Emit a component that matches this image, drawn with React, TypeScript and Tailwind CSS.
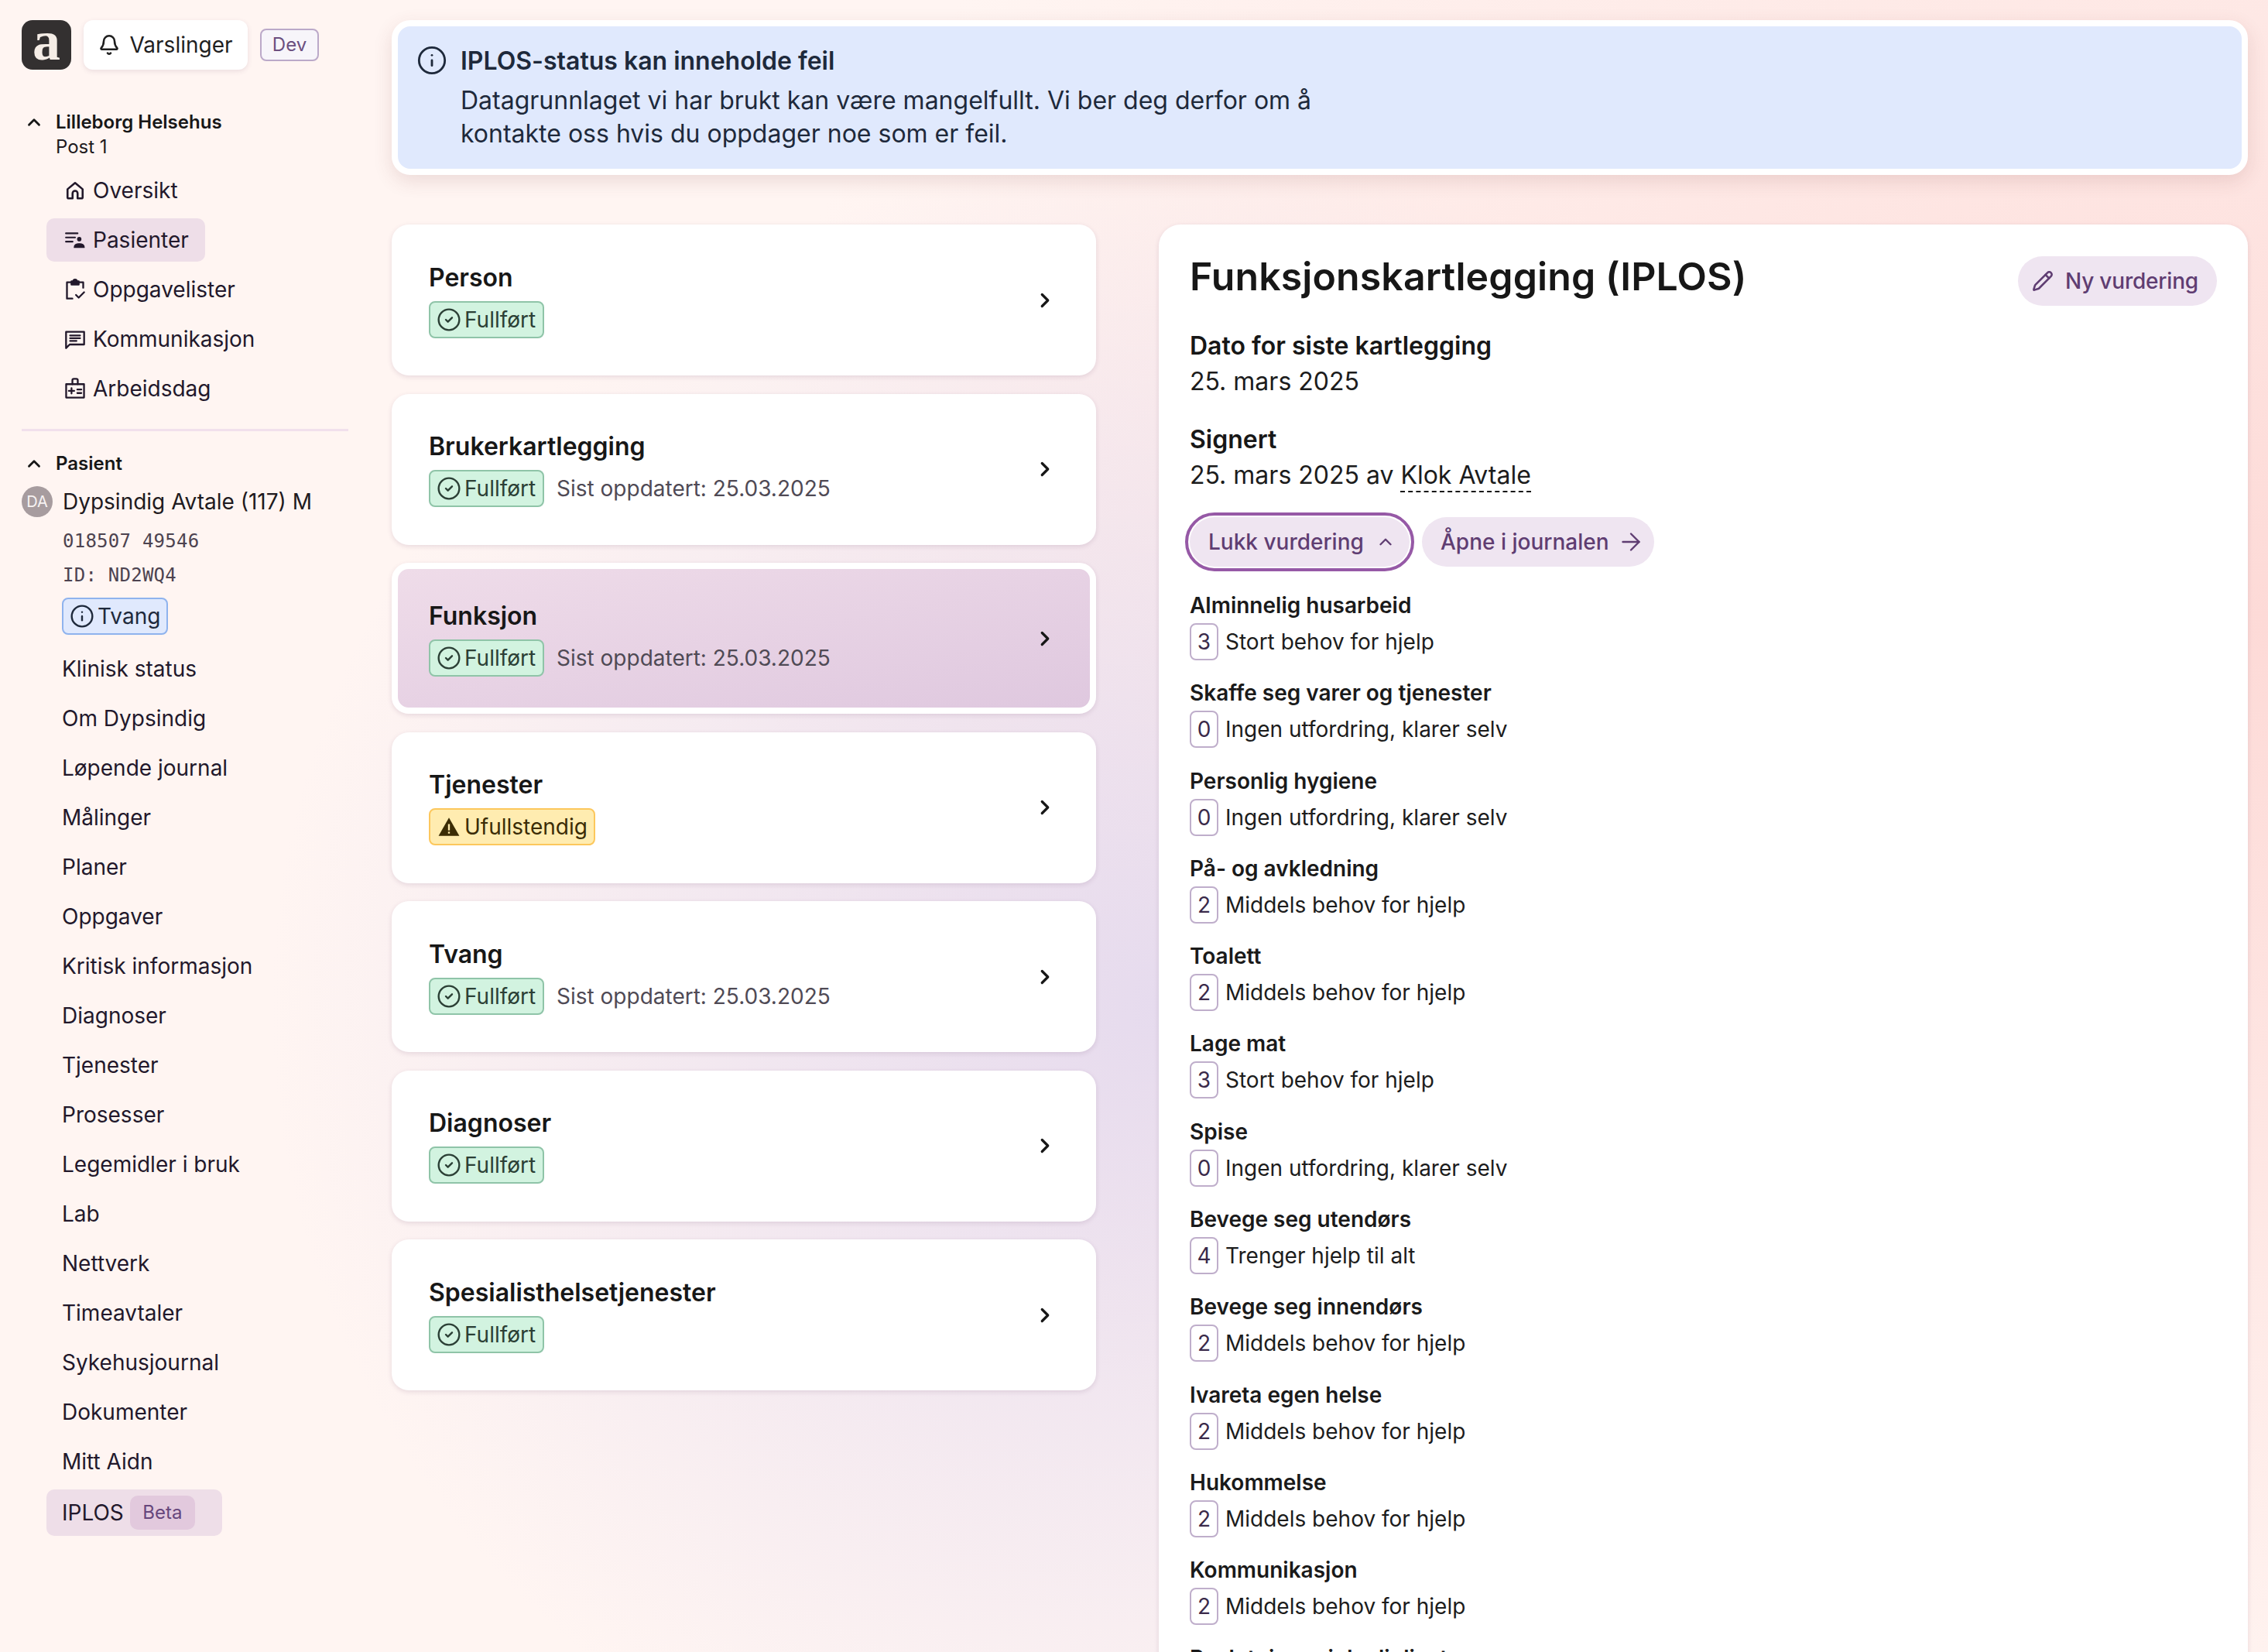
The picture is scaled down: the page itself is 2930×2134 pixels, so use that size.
import React from 'react';
import { ArrowRight, Bell, ChevronRight, ChevronUp, CircleCheck, Info, Pencil } from 'lucide-react';

const FONT = "font-['Inter',sans-serif]";

const HomeIcon = () => (
  <svg width="26" height="26" viewBox="0 0 24 24" fill="none" stroke="currentColor" strokeWidth="2.4" strokeLinejoin="round">
    <path d="M3 10.500 12 3l9 7.500V20a1.500 1.500 0 0 1-1.500 1.500H15v-6a3 3 0 0 0-6 0v6H4.500A1.500 1.500 0 0 1 3 20z" />
  </svg>
);

const PatientListIcon = () => (
  <svg width="28" height="26" viewBox="0 0 26 24" fill="none" stroke="currentColor" strokeWidth="2" strokeLinecap="round">
    <path d="M2 4h14M2 9h11M2 14h8" />
    <circle cx="18" cy="11" r="2.600" fill="currentColor" stroke="none" />
    <path d="M12 21c0-3.200 2.500-4.500 6-4.500s6 1.300 6 4.500z" fill="currentColor" stroke="currentColor" strokeWidth="1.200" strokeLinejoin="round" />
  </svg>
);

const TaskListIcon = () => (
  <svg width="28" height="28" viewBox="0 0 24 24" fill="none" stroke="currentColor" strokeWidth="2" strokeLinecap="round" strokeLinejoin="round">
    <path d="M8 4H3v18h6M16 4h5v6" />
    <path d="M8 3h2a2 2 0 0 1 4 0h2v3.500H8z" fill="currentColor" />
    <path d="m13 18 3 3 6-6" />
  </svg>
);

const MessageIcon = () => (
  <svg width="28" height="28" viewBox="0 0 24 24" fill="none" stroke="currentColor" strokeWidth="2" strokeLinejoin="round" strokeLinecap="round">
    <path d="M2 4h20v14H6l-4 4z" />
    <path d="M6.500 8h11M6.500 11h11M6.500 14h7" />
  </svg>
);

const WorkdayIcon = () => (
  <svg width="28" height="30" viewBox="0 0 24 26" fill="none" stroke="currentColor" strokeWidth="2" strokeLinejoin="round" strokeLinecap="round">
    <path d="M2 8h20v15H2z" />
    <path d="M9 8V3.500a1.500 1.500 0 0 1 1.500-1.500h3A1.500 1.500 0 0 1 15 3.500V8" />
    <path d="M5 15.500h6M8 12.500v6M14.500 14h4.500M14.500 18h4.500" />
  </svg>
);

const WarningIcon = () => (
  <svg width="28" height="28" viewBox="0 0 24 24">
    <path d="M12 2 23.500 22H.5z" fill="#3b2c05" />
    <rect x="11" y="9" width="2" height="7" fill="#ffecb0" />
    <rect x="11" y="17.500" width="2" height="2" fill="#ffecb0" />
  </svg>
);

const topLinks = [
  { label: 'Oversikt', icon: <HomeIcon /> },
  { label: 'Pasienter', icon: <PatientListIcon />, active: true },
  { label: 'Oppgavelister', icon: <TaskListIcon /> },
  { label: 'Kommunikasjon', icon: <MessageIcon /> },
  { label: 'Arbeidsdag', icon: <WorkdayIcon /> },
];

const patientLinks = [
  'Klinisk status',
  'Om Dypsindig',
  'Løpende journal',
  'Målinger',
  'Planer',
  'Oppgaver',
  'Kritisk informasjon',
  'Diagnoser',
  'Tjenester',
  'Prosesser',
  'Legemidler i bruk',
  'Lab',
  'Nettverk',
  'Timeavtaler',
  'Sykehusjournal',
  'Dokumenter',
  'Mitt Aidn',
];

const sections = [
  { title: 'Person', done: true },
  { title: 'Brukerkartlegging', done: true, updated: true },
  { title: 'Funksjon', done: true, updated: true, selected: true },
  { title: 'Tjenester', done: false },
  { title: 'Tvang', done: true, updated: true },
  { title: 'Diagnoser', done: true },
  { title: 'Spesialisthelsetjenester', done: true },
];

const LEVELS: Record<number, string> = {
  0: 'Ingen utfordring, klarer selv',
  2: 'Middels behov for hjelp',
  3: 'Stort behov for hjelp',
  4: 'Trenger hjelp til alt',
};

const assessments: [string, number][] = [
  ['Alminnelig husarbeid', 3],
  ['Skaffe seg varer og tjenester', 0],
  ['Personlig hygiene', 0],
  ['På- og avkledning', 2],
  ['Toalett', 2],
  ['Lage mat', 3],
  ['Spise', 0],
  ['Bevege seg utendørs', 4],
  ['Bevege seg innendørs', 2],
  ['Ivareta egen helse', 2],
  ['Hukommelse', 2],
  ['Kommunikasjon', 2],
  ['Beslutninger i dagliglivet', 2],
];

const StatusBadge = ({ done }: { done: boolean }) =>
  done ? (
    <span className="flex h-[48px] w-[149px] items-center gap-[4px] rounded-[8px] border-2 border-[#8fc4a8] bg-[#d2f3e0] pl-[8px] text-[28px] text-[#2b3f35]">
      <CircleCheck size={32} strokeWidth={1.8} />
      Fullført
    </span>
  ) : (
    <span className="flex h-[48px] items-center gap-[6px] rounded-[8px] border-2 border-[#fcc75c] bg-[#ffecb0] pl-[10px] pr-[8px] text-[28px] text-[#3b2c05]">
      <WarningIcon />
      Ufullstendig
    </span>
  );

const SectionCard = ({ title, done, updated, selected }: { title: string; done: boolean; updated?: boolean; selected?: boolean }) => (
  <div
    className={
      selected
        ? 'flex h-[195px] items-center justify-between rounded-[22px] border-8 border-white bg-gradient-to-br from-[#efdce9] to-[#dfc8df] pl-[40px] pr-[43px] shadow-[0_2px_6px_rgba(90,50,90,0.14)]'
        : 'flex h-[195px] items-center justify-between rounded-[22px] bg-white pl-[48px] pr-[51px] shadow-[0_2px_6px_rgba(90,50,90,0.14)]'
    }
  >
    <div>
      <div className="mb-[10px] text-[32px] leading-[40px] font-semibold text-[#171717]">{title}</div>
      <div className="flex items-center gap-[16px]">
        <StatusBadge done={done} />
        {updated && <span className="text-[28px] text-[#4f4a55]">Sist oppdatert: 25.03.2025</span>}
      </div>
    </div>
    <ChevronRight size={30} strokeWidth={2.6} className="text-[#171717]" />
  </div>
);

const AssessmentRow = ({ label, level }: { label: string; level: number }) => (
  <div>
    <div className="mb-[5px] text-[28px] leading-[36px] font-semibold text-[#1a1a1a]">{label}</div>
    <div className="flex items-center gap-[9px] text-[28px] text-[#1c1c1c]">
      <span className="flex h-[48px] w-[37px] items-center justify-center rounded-[8px] border-2 border-[#bfaecb] text-[#3a2a4a]">{level}</span>
      {LEVELS[level]}
    </div>
  </div>
);

export default function App() {
  return (
    <div
      className={`${FONT} flex h-screen overflow-hidden bg-[#fff5f2] bg-[radial-gradient(ellipse_1150px_1100px_at_1500px_1300px,#e6dbee,transparent),radial-gradient(ellipse_2000px_1500px_at_2930px_800px,#fddad7,transparent)]`}
    >
      {/* sidebar */}
      <aside className="w-[506px] shrink-0 pl-[28px] pt-[26px] text-[#22182b]">
        <div className="flex items-center">
          <div className="flex h-[64px] w-[64px] items-center justify-center rounded-[14px] bg-[#333030] pb-[10px] font-['Liberation_Serif',serif] text-[72px] leading-none font-bold text-[#f5ede6]">
            a
          </div>
          <button className="ml-[16px] flex h-[64px] w-[212px] items-center justify-center gap-[12px] rounded-[12px] bg-white text-[28px] text-[#1f1f1f] shadow-[0_2px_6px_rgba(90,50,90,0.12)]">
            <Bell size={28} strokeWidth={2.2} />
            Varslinger
          </button>
          <span className="ml-[16px] flex h-[42px] w-[76px] items-center justify-center rounded-[8px] border-2 border-[#bba9c9] bg-[#f7f5fa] text-[24px] text-[#6b4f7f]">
            Dev
          </span>
        </div>

        <div className="mt-[52px] flex items-start">
          <ChevronUp size={26} strokeWidth={2.6} className="ml-[3px] mt-[3px] text-[#171717]" />
          <div className="ml-[15px] text-[24px] leading-[32px] text-[#1f1a20]">
            <div className="font-semibold text-[#171717]">Lilleborg Helsehus</div>
            <div>Post 1</div>
          </div>
        </div>

        <nav className="mt-[12px] flex flex-col gap-[8px]">
          {topLinks.map((link) => (
            <div
              key={link.label}
              className={`ml-[32px] flex h-[56px] w-fit items-center gap-[9px] rounded-[10px] pl-[23px] pr-[21px] text-[28px] ${link.active ? 'bg-[#eedee8]' : ''}`}
            >
              <span className="flex w-[28px] justify-center">{link.icon}</span>
              {link.label}
            </div>
          ))}
        </nav>

        <div className="mt-[24px] h-[3px] w-[422px] bg-[#f1e0ec]" />

        <div className="mt-[26px] flex h-[32px] items-center">
          <ChevronUp size={26} strokeWidth={2.6} className="ml-[3px] text-[#171717]" />
          <span className="ml-[15px] text-[24px] font-semibold text-[#171717]">Pasient</span>
        </div>

        <div className="mt-[13px] flex h-[40px] items-center">
          <span className="flex h-[40px] w-[40px] items-center justify-center rounded-full bg-[#a79c9f] text-[20px] text-[#f7f3f3]">DA</span>
          <span className="ml-[13px] text-[28px] text-[#1f1a20]">Dypsindig Avtale (117) M</span>
        </div>

        <div className="ml-[53px] mt-[15px] h-[32px] font-['DejaVu_Sans_Mono',monospace] text-[24px] leading-[32px] tracking-[0.25px] text-[#4d4350]">018507 49546</div>
        <div className="ml-[53px] mt-[12px] h-[32px] font-['DejaVu_Sans_Mono',monospace] text-[24px] leading-[32px] tracking-[0.25px] text-[#4d4350]">ID: ND2WQ4</div>
        <div className="ml-[52px] mt-[13px] flex h-[48px] w-[137px] items-center gap-[4px] rounded-[8px] border-2 border-[#8fb3ee] bg-[#e0e9fd] pl-[8px] text-[28px] text-[#1e293b]">
          <Info size={32} strokeWidth={1.8} />
          Tvang
        </div>

        <nav className="mt-[16px] flex flex-col gap-[8px]">
          {patientLinks.map((label) => (
            <div key={label} className="ml-[52px] flex h-[56px] items-center text-[28px]">
              {label}
            </div>
          ))}
          <div className="ml-[32px] flex h-[60px] w-[227px] items-center gap-[8px] rounded-[10px] bg-[#eedee8] pl-[20px] text-[28px]">
            IPLOS
            <span className="flex h-[44px] w-[84px] items-center justify-center rounded-[10px] bg-[#e2c9dd] text-[24px] text-[#66467c]">Beta</span>
          </div>
        </nav>
      </aside>

      {/* main */}
      <main className="min-w-0 flex-1 pr-[26px] pt-[26px]">
        <div className="flex h-[200px] gap-[17px] rounded-[24px] border-8 border-white bg-[#e0e9fd] pl-[24px] pt-[24px] text-[#1e293b] shadow-[0_8px_24px_rgba(120,60,60,0.14)]">
          <Info size={40} strokeWidth={1.7} className="shrink-0" />
          <div>
            <div className="text-[32px] leading-[42px] font-semibold">IPLOS-status kan inneholde feil</div>
            <p className="mt-[8px] max-w-[1150px] text-[32px] leading-[43px]">
              Datagrunnlaget vi har brukt kan være mangelfullt. Vi ber deg derfor om å kontakte oss hvis du oppdager noe som er feil.
            </p>
          </div>
        </div>

        <div className="mt-[64px] flex items-start gap-[81px]">
          <div className="flex w-[910px] shrink-0 flex-col gap-[23.500px]">
            {sections.map((section) => (
              <SectionCard key={section.title} {...section} />
            ))}
          </div>

          <section className="h-[1900px] w-[1407px] shrink-0 rounded-[28px] bg-white pl-[40px] pr-[40px] pt-[34px] shadow-[0_2px_6px_rgba(90,50,90,0.14)]">
            <div className="flex items-start justify-between">
              <h1 className="text-[50px] leading-[66px] font-semibold tracking-[0.1px] text-[#171717]">Funksjonskartlegging (IPLOS)</h1>
              <button className="mt-[7px] flex h-[64px] w-[257px] items-center gap-[15px] rounded-full bg-[#efe5f1] pl-[18px] text-[28px] font-medium tracking-[-0.2px] text-[#5f3d72]">
                <Pencil size={28} strokeWidth={2.2} />
                Ny vurdering
              </button>
            </div>

            <div className="mt-[29px] text-[32px] leading-[46px] font-semibold text-[#171717]">Dato for siste kartlegging</div>
            <div className="text-[32px] leading-[46px] text-[#1c1c1c]">25. mars 2025</div>
            <div className="mt-[29px] text-[32px] leading-[46px] font-semibold text-[#171717]">Signert</div>
            <div className="text-[32px] leading-[46px] text-[#1c1c1c]">
              25. mars 2025 av <span className="border-b-2 border-dashed border-[#171717] pb-[1px]">Klok Avtale</span>
            </div>

            <div className="mt-[31px] flex gap-[16px]">
              <button className="flex h-[64px] w-[284px] items-center gap-[15px] rounded-full bg-[#efe5f1] pl-[24px] text-[28px] font-medium text-[#5f3d72] outline-[4px] outline-offset-[2px] outline-[#9659a6]">
                Lukk vurdering
                <ChevronUp size={26} strokeWidth={2.2} />
              </button>
              <button className="flex h-[64px] w-[300px] items-center gap-[10px] rounded-full bg-[#efe5f1] pl-[24px] text-[28px] font-medium text-[#5f3d72]">
                Åpne i journalen
                <ArrowRight size={36} strokeWidth={1.6} />
              </button>
            </div>

            <div className="mt-[32px] flex flex-col gap-[24.300px]">
              {assessments.map(([label, level]) => (
                <AssessmentRow key={label} label={label} level={level} />
              ))}
            </div>
          </section>
        </div>
      </main>
    </div>
  );
}
